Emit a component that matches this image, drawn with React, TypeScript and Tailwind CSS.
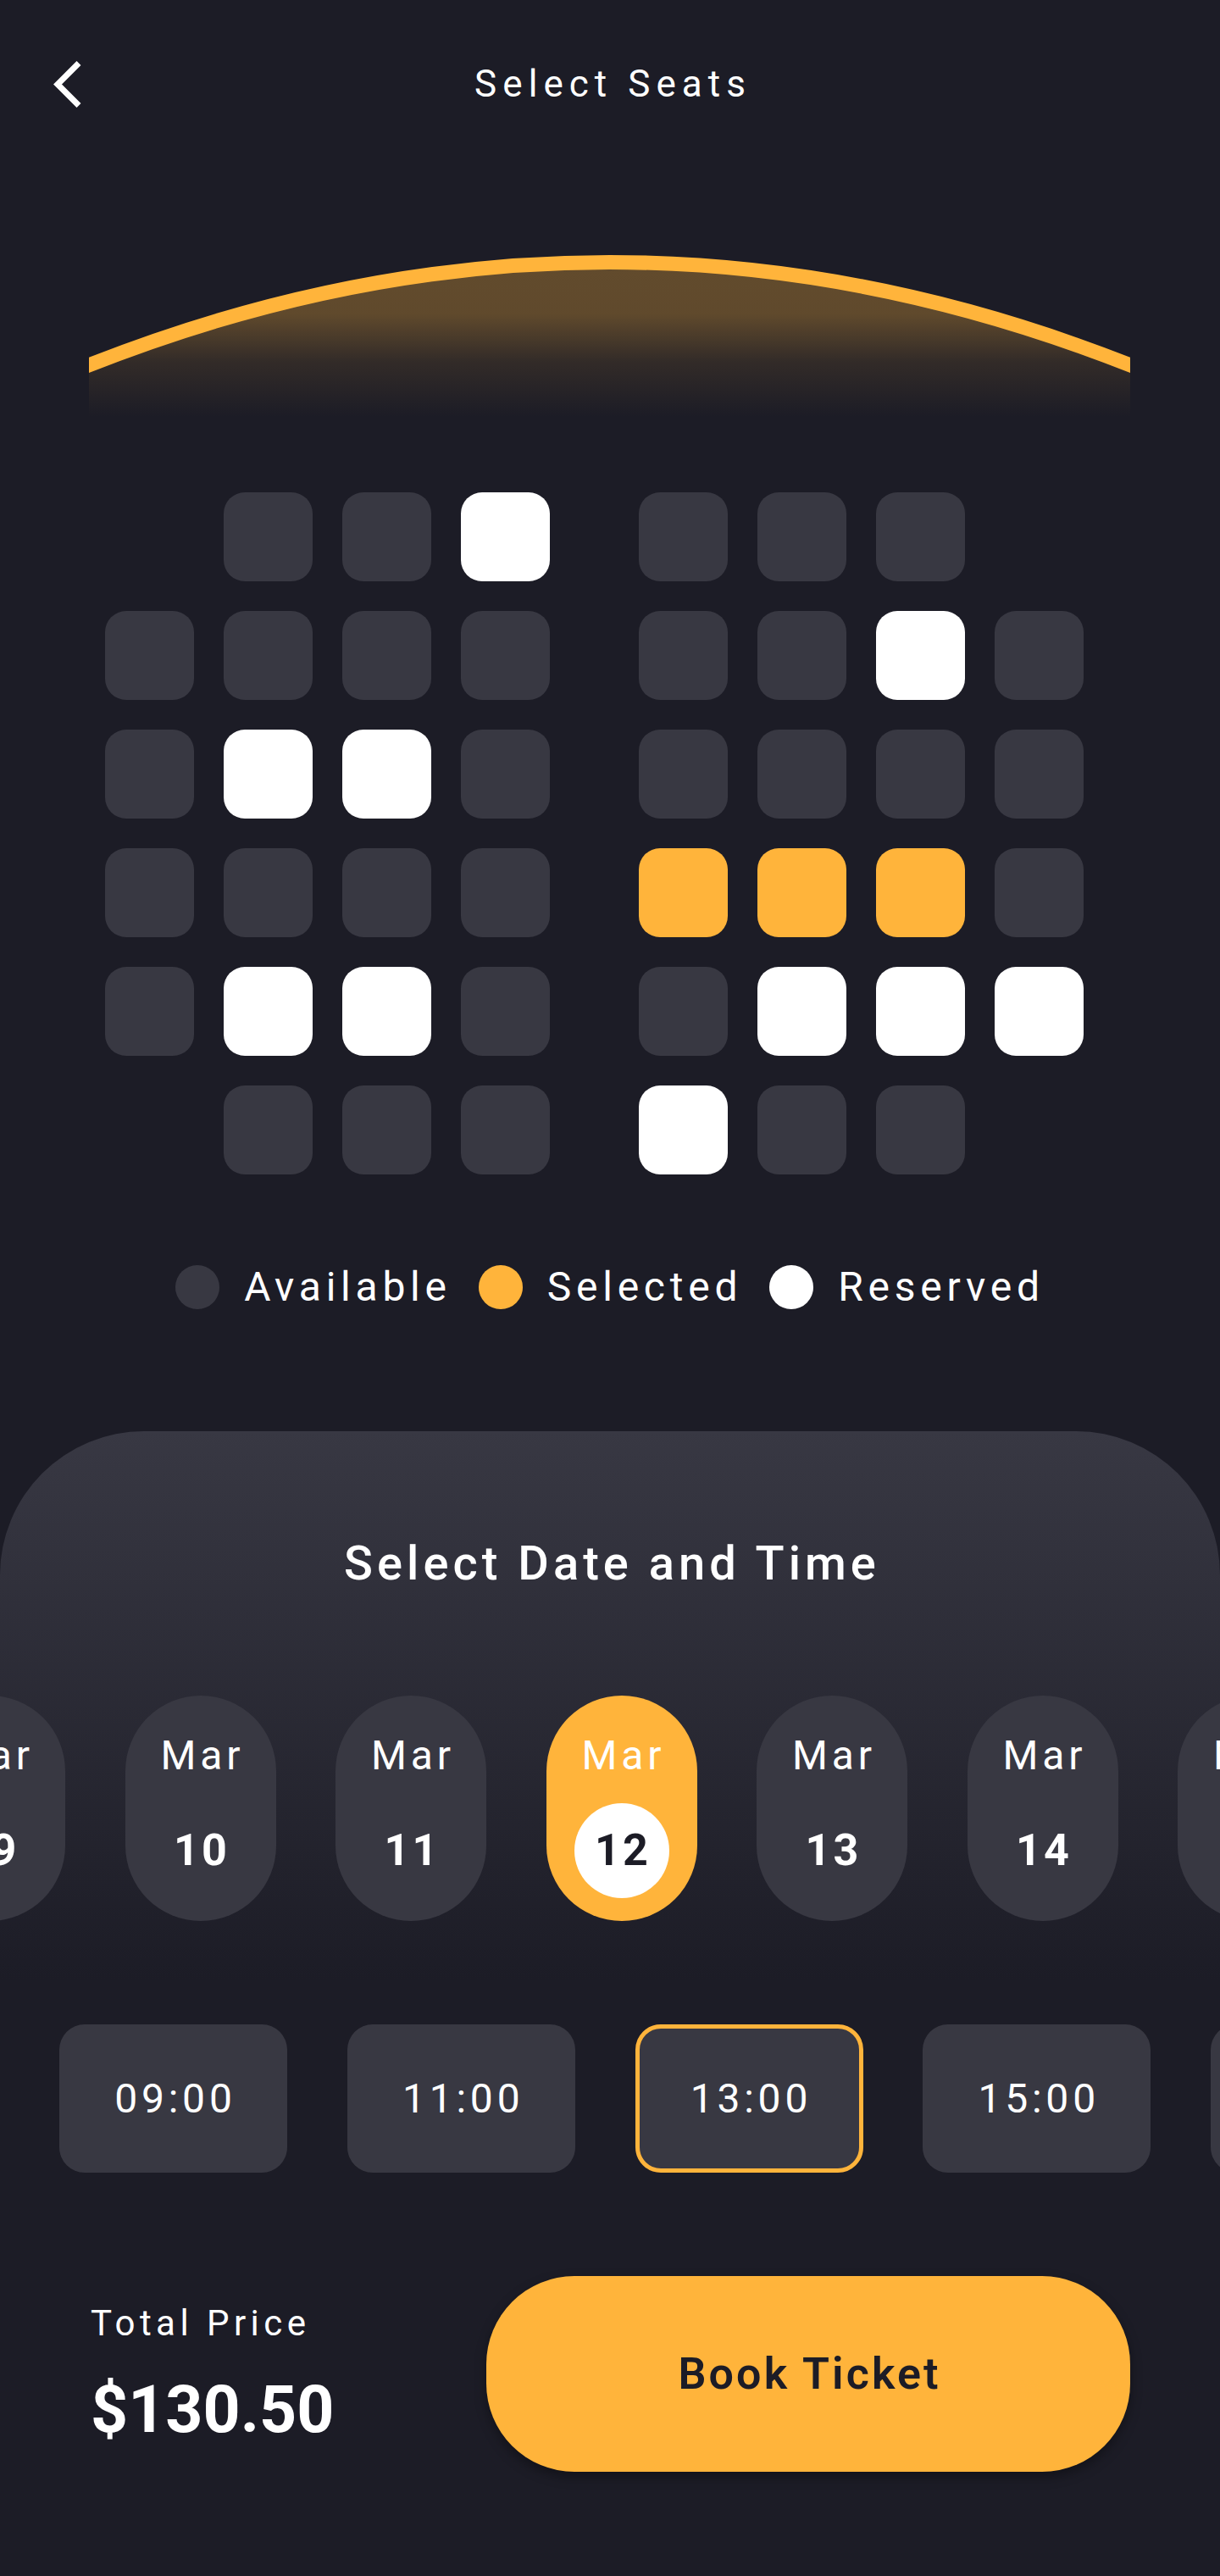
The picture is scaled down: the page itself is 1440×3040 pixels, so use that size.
import React from 'react';

type S = 'a' | 'r' | 's' | '_';

const rows: S[][] = [
  ['_', 'a', 'a', 'r', 'a', 'a', 'a', '_'],
  ['a', 'a', 'a', 'a', 'a', 'a', 'r', 'a'],
  ['a', 'r', 'r', 'a', 'a', 'a', 'a', 'a'],
  ['a', 'a', 'a', 'a', 's', 's', 's', 'a'],
  ['a', 'r', 'r', 'a', 'a', 'r', 'r', 'r'],
  ['_', 'a', 'a', 'a', 'r', 'a', 'a', '_'],
];

function Seat({ s }: { s: S }) {
  const cls =
    s === '_'
      ? 'invisible'
      : s === 'a'
      ? 'bg-[#383842]'
      : s === 'r'
      ? 'bg-white'
      : 'bg-[#FFB43B]';
  return <div className={`w-[105px] h-[105px] rounded-[25px] shrink-0 ${cls}`} />;
}

const dates = ['09', '10', '11', '12', '13', '14', '15'];
const times = ['09:00', '11:00', '13:00', '15:00', '17:00'];

export default function App() {
  return (
    <div className="w-[1440px] h-[3040px] bg-[#1c1c26] text-white font-['Roboto',sans-serif] overflow-hidden flex flex-col">
      {/* Header */}
      <div className="grid grid-cols-[200px_1fr_200px] h-[198px] items-center shrink-0">
        <div className="pl-[60px] flex items-center">
          <svg width="40" height="60" viewBox="60 68 40 60">
            <polyline
              points="93,73.5 68,98.5 93,123.5"
              fill="none"
              stroke="white"
              strokeWidth="7"
              strokeLinejoin="miter"
              strokeLinecap="butt"
            />
          </svg>
        </div>
        <div className="text-center text-[44px] leading-none tracking-[0.16em] pl-[0.16em]">Select Seats</div>
        <div />
      </div>

      {/* Screen arc */}
      <svg width="1440" height="300" viewBox="0 198 1440 300" className="shrink-0 block">
        <defs>
          <linearGradient id="scr" gradientUnits="userSpaceOnUse" x1="0" y1="305" x2="0" y2="492">
            <stop offset="0" stopColor="#FFB43B" stopOpacity="0.31" />
            <stop offset="0.35" stopColor="#FFB43B" stopOpacity="0.3" />
            <stop offset="0.65" stopColor="#FFB43B" stopOpacity="0.1" />
            <stop offset="1" stopColor="#FFB43B" stopOpacity="0" />
          </linearGradient>
          <clipPath id="clp">
            <rect x="105" y="198" width="1229" height="300" />
          </clipPath>
        </defs>
        <g clipPath="url(#clp)">
          <path d="M85,439 Q719.5,180 1354,439 L1354,498 L85,498 Z" fill="url(#scr)" />
          <path d="M85,439 Q719.5,180 1354,439" fill="none" stroke="#FFB43B" strokeWidth="17" />
        </g>
      </svg>

      {/* Seats */}
      <div className="mt-[83px] pl-[124px] flex flex-col gap-[35px] shrink-0">
        {rows.map((r, i) => (
          <div key={i} className="flex gap-[35px]">
            {r.slice(0, 4).map((s, j) => (
              <Seat key={j} s={s} />
            ))}
            <div className="w-[35px] shrink-0" />
            {r.slice(4).map((s, j) => (
              <Seat key={j + 4} s={s} />
            ))}
          </div>
        ))}
      </div>

      {/* Legend */}
      <div className="mt-[107px] h-[52px] flex items-center justify-center shrink-0 text-[48px] leading-none tracking-[0.12em]">
        <div className="w-[52px] h-[52px] rounded-full bg-[#383842]" />
        <span className="ml-[29px] mr-[32px]">Available</span>
        <div className="w-[52px] h-[52px] rounded-full bg-[#FFB43B]" />
        <span className="ml-[29px] mr-[32px]">Selected</span>
        <div className="w-[52px] h-[52px] rounded-full bg-white" />
        <span className="ml-[29px]">Reserved</span>
      </div>

      {/* Sheet */}
      <div className="mt-[144px] flex-1 rounded-t-[170px] overflow-hidden bg-[linear-gradient(180deg,#383843_0%,#1c1c26_48%)] flex flex-col">
        <div className="pt-[128px] text-center text-[56px] leading-none font-medium tracking-[0.09em] pl-[0.09em]">
          Select Date and Time
        </div>

        <div className="mt-[128px] flex gap-[70.5px] -ml-[101px]">
          {dates.map((d) => {
            const sel = d === '12';
            return (
              <div
                key={d}
                className={`w-[178px] h-[266px] shrink-0 rounded-full flex flex-col items-center pt-[47px] ${
                  sel ? 'bg-[#FFB43B]' : 'bg-[#383842]'
                }`}
              >
                <div className="text-[48px] leading-none tracking-[0.1em] pl-[0.1em]">Mar</div>
                <div
                  className={`mt-[32px] w-[112px] h-[112px] rounded-full flex items-center justify-center text-[52px] font-bold leading-none tracking-[0.06em] pl-[0.06em] ${
                    sel ? 'bg-white text-[#1c1c26]' : 'text-white'
                  }`}
                >
                  {d}
                </div>
              </div>
            );
          })}
        </div>

        <div className="mt-[122px] flex gap-[70.75px] pl-[70px]">
          {times.map((t) => {
            const sel = t === '13:00';
            return (
              <div
                key={t}
                className={`w-[269px] h-[175px] shrink-0 rounded-[30px] bg-[#383842] flex items-center justify-center text-[48px] leading-none tracking-[0.1em] pl-[0.1em] ${
                  sel ? 'border-[5px] border-[#FFB43B]' : ''
                }`}
              >
                {t}
              </div>
            );
          })}
        </div>

        <div className="mt-[122px] flex items-center justify-between pl-[107px] pr-[106px]">
          <div className="flex flex-col">
            <div className="text-[42px] leading-none tracking-[0.13em]">Total Price</div>
            <div className="mt-[43px] text-[77px] leading-none font-bold">$130.50</div>
          </div>
          <div className="w-[760px] h-[231px] rounded-[104px] bg-[#FFB43B] flex items-center justify-center shadow-[0_6px_14px_rgba(0,0,0,0.35)]">
            <span className="text-[52px] leading-none font-semibold tracking-[0.06em] pl-[0.06em] text-[#1c1c26]">
              Book Ticket
            </span>
          </div>
        </div>
      </div>
    </div>
  );
}
